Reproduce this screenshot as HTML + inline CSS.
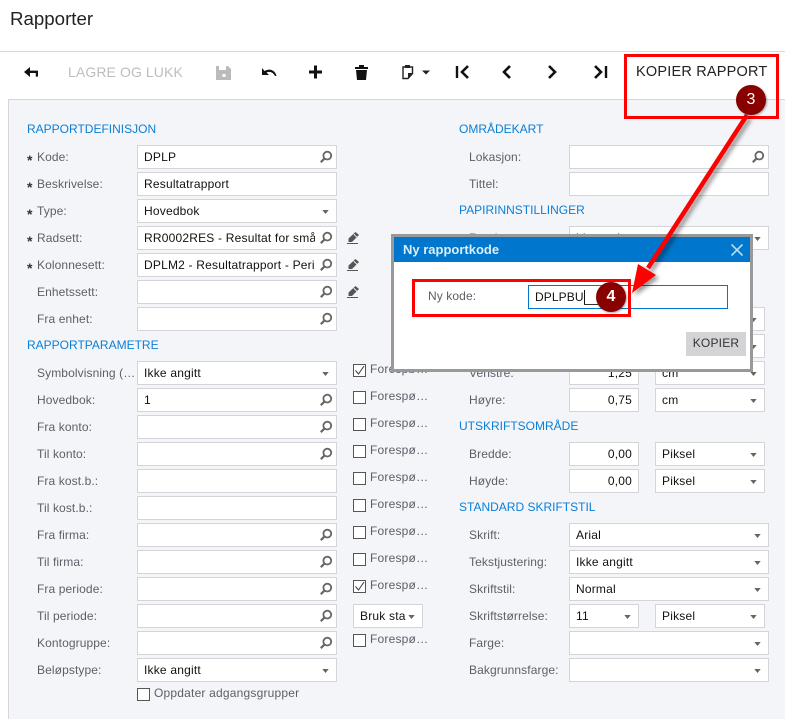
<!DOCTYPE html>
<html lang="no"><head><meta charset="utf-8"><title>Rapporter</title>
<style>
html,body{margin:0;padding:0;background:#fff}
body{width:785px;height:719px;overflow:hidden;position:relative;font-family:"Liberation Sans",Arial,sans-serif;font-size:12px;color:#111}
.a{position:absolute;white-space:nowrap}
.title{left:10px;top:7px;font-size:18.7px;line-height:24px;color:#222}
.hline{left:0;top:51px;width:785px;height:1px;background:#d8d8d8}
.panel{left:8px;top:99px;width:777px;height:620px;box-sizing:border-box;background:#f4f5f8;border:1px solid #d6d6d6;border-right:0;border-bottom:0}
.tb{top:63px;font-size:14px;line-height:18px}
.h{font-size:12px;line-height:16px;color:#0a7fd6;left:27px}
.l{font-size:12px;line-height:16px;color:#5e5e68;letter-spacing:.1px}
.s{font-size:14px;font-weight:bold;line-height:16px;left:27px;color:#333}
.f{height:24px;box-sizing:border-box;border:1px solid #d3d5d8;background:#fff;font-size:12px;line-height:22px;padding-left:6px;overflow:hidden;letter-spacing:.2px}
.w1{left:137px;width:200px}.w2{left:569px;width:200px}.n{left:569px;width:70px;text-align:right;padding:0 6px 0 0}.u{left:655px;width:110px}
.c{width:13px;height:13px;box-sizing:border-box;left:353px;border:1px solid #555;background:#fff}
.fp{left:370px;font-size:12px;line-height:16px;color:#5e5e68;letter-spacing:.2px}
svg.i{position:absolute;overflow:visible}
.dlg{left:391px;top:234px;width:362px;height:138px;box-sizing:border-box;border:3px solid #999;background:#fff}
.dh{left:0;top:0;width:356px;height:25px;background:#0077cc;color:#d8eefa;font-size:13px;font-weight:bold;line-height:25px;padding-left:9px;box-sizing:border-box}
.num{width:30px;height:30px;border-radius:50%;background:#880000;color:#fff;text-align:center;line-height:30px;font-size:16px;box-shadow:1px 1px 2px rgba(0,0,0,.35)}
</style></head><body>
<svg width="0" height="0" style="position:absolute"><defs>
<symbol id="se" viewBox="0 0 12 12" overflow="visible"><circle cx="7.300" cy="4.600" r="3.900" fill="none" stroke="#666" stroke-width="1.800"/><path d="M4.500 7.500 .8 11.200" stroke="#666" stroke-width="2.200" fill="none"/></symbol>
<symbol id="ca" viewBox="0 0 8 5"><path d="M0 0h8L4 5z" fill="#666"/></symbol>
<symbol id="pe" viewBox="0 0 12 12" overflow="visible"><path d="M8.500 0 12 3 5 10H1.500V6.500z" fill="#555"/><path d="M0 11.500h11" stroke="#555"/><path d="M6.800 2.200l3 3" stroke="#f4f5f8"/></symbol>
<symbol id="ck" viewBox="0 0 13 13" overflow="visible"><path d="M2.500 6.500 5.500 10 11 2" fill="none" stroke="#444" stroke-width="1.100"/></symbol>
</defs></svg>

<div class="a title">Rapporter</div>
<div class="a hline"></div>
<div class="a panel"></div>

<!-- toolbar -->
<svg class="i" style="left:0;top:0" width="785" height="99">
<path d="M24 72l6-5v3.600h8v6h-2.200v-3.600H30V77z" fill="#111"/>
<path d="M216 66h12l3 3v11h-15z" fill="#bbb"/><rect x="219" y="66" width="7" height="4" fill="#fff"/><rect x="222.500" y="74" width="3" height="3" fill="#fff"/>
<path d="M262 68v7h7l-2.500-2.500c3-1.500 6.500-.5 8.500 3.500h1.500c-1-5-6-8.500-12-5z" fill="#111"/>
<path d="M309 70.500h5v-5h3v5h5v3h-5v5h-3v-5h-5z" fill="#111"/>
<path d="M355 67h4v-2h5v2h4v2h-13z" fill="#111"/><path d="M356 70h11l-1 10h-9z" fill="#111"/>
<path d="M403 67h9.500v6.500l-4.500 5h-5z" fill="none" stroke="#222" stroke-width="1.400"/><rect x="405" y="65" width="5" height="3" fill="#222"/><path d="M408 78v-5h4.500z" fill="#222"/>
<path d="M422 70.500h8l-4 4z" fill="#222"/>
<path d="M457 66v12" stroke="#111" stroke-width="2.400"/><path d="M468 66l-6 6 6 6" fill="none" stroke="#111" stroke-width="2.600"/>
<path d="M510 66l-6 6 6 6" fill="none" stroke="#111" stroke-width="2.600"/>
<path d="M549 66l6 6-6 6" fill="none" stroke="#111" stroke-width="2.600"/>
<path d="M595 66l6 6-6 6" fill="none" stroke="#111" stroke-width="2.600"/><path d="M606 66v12" stroke="#111" stroke-width="2.400"/>
</svg>
<div class="a tb" style="left:68px;color:#bdbdbd;font-size:14px;letter-spacing:.1px">LAGRE OG LUKK</div>
<div class="a tb" style="left:636px;color:#222;font-size:14.500px;letter-spacing:.2px">KOPIER RAPPORT</div>

<!-- left column -->
<div class="a h" style="top:121px">RAPPORTDEFINISJON</div>
<div class="a s" style="top:152px">*</div><div class="a l" style="left:37px;top:149px">Kode:</div>
<div class="a f w1" style="top:145px">DPLP</div>
<div class="a s" style="top:179px">*</div><div class="a l" style="left:37px;top:176px">Beskrivelse:</div>
<div class="a f w1" style="top:172px">Resultatrapport</div>
<div class="a s" style="top:206px">*</div><div class="a l" style="left:37px;top:203px">Type:</div>
<div class="a f w1" style="top:199px">Hovedbok</div>
<div class="a s" style="top:233px">*</div><div class="a l" style="left:37px;top:230px">Radsett:</div>
<div class="a f w1" style="top:226px"><div style="width:171px;overflow:hidden">RR0002RES - Resultat for små bedrifter</div></div>
<div class="a s" style="top:260px">*</div><div class="a l" style="left:37px;top:257px">Kolonnesett:</div>
<div class="a f w1" style="top:253px"><div style="width:171px;overflow:hidden">DPLM2 - Resultatrapport - Periode</div></div>
<div class="a l" style="left:37px;top:284px">Enhetssett:</div><div class="a f w1" style="top:280px"></div>
<div class="a l" style="left:37px;top:311px">Fra enhet:</div><div class="a f w1" style="top:307px"></div>

<div class="a h" style="top:337px">RAPPORTPARAMETRE</div>
<div class="a l" style="left:37px;top:365px">Symbolvisning (…</div><div class="a f w1" style="top:361px">Ikke angitt</div>
<div class="a l" style="left:37px;top:392px">Hovedbok:</div><div class="a f w1" style="top:388px">1</div>
<div class="a l" style="left:37px;top:419px">Fra konto:</div><div class="a f w1" style="top:415px"></div>
<div class="a l" style="left:37px;top:446px">Til konto:</div><div class="a f w1" style="top:442px"></div>
<div class="a l" style="left:37px;top:473px">Fra kost.b.:</div><div class="a f w1" style="top:469px"></div>
<div class="a l" style="left:37px;top:500px">Til kost.b.:</div><div class="a f w1" style="top:496px"></div>
<div class="a l" style="left:37px;top:527px">Fra firma:</div><div class="a f w1" style="top:523px"></div>
<div class="a l" style="left:37px;top:554px">Til firma:</div><div class="a f w1" style="top:550px"></div>
<div class="a l" style="left:37px;top:581px">Fra periode:</div><div class="a f w1" style="top:577px"></div>
<div class="a l" style="left:37px;top:608px">Til periode:</div><div class="a f w1" style="top:604px"></div>
<div class="a l" style="left:37px;top:635px">Kontogruppe:</div><div class="a f w1" style="top:631px"></div>
<div class="a l" style="left:37px;top:662px">Beløpstype:</div><div class="a f w1" style="top:658px">Ikke angitt</div>
<div class="a c" style="left:137px;top:688px"></div><div class="a fp" style="left:154px;top:685px">Oppdater adgangsgrupper</div>

<!-- checkboxes -->
<div class="a c" style="top:364px"></div><div class="a fp" style="top:361px">Forespø…</div>
<div class="a c" style="top:391px"></div><div class="a fp" style="top:388px">Forespø…</div>
<div class="a c" style="top:418px"></div><div class="a fp" style="top:415px">Forespø…</div>
<div class="a c" style="top:445px"></div><div class="a fp" style="top:442px">Forespø…</div>
<div class="a c" style="top:472px"></div><div class="a fp" style="top:469px">Forespø…</div>
<div class="a c" style="top:499px"></div><div class="a fp" style="top:496px">Forespø…</div>
<div class="a c" style="top:526px"></div><div class="a fp" style="top:523px">Forespø…</div>
<div class="a c" style="top:553px"></div><div class="a fp" style="top:550px">Forespø…</div>
<div class="a c" style="top:580px"></div><div class="a fp" style="top:577px">Forespø…</div>
<div class="a f" style="left:353px;top:604px;width:70px">Bruk sta</div>
<div class="a c" style="top:634px"></div><div class="a fp" style="top:631px">Forespø…</div>

<!-- right column -->
<div class="a h" style="left:459px;top:121px">OMRÅDEKART</div>
<div class="a l" style="left:469px;top:149px">Lokasjon:</div><div class="a f w2" style="top:145px"></div>
<div class="a l" style="left:469px;top:176px">Tittel:</div><div class="a f w2" style="top:172px"></div>
<div class="a h" style="left:459px;top:202px">PAPIRINNSTILLINGER</div>
<div class="a l" style="left:469px;top:230px">Retning:</div><div class="a f w2" style="top:226px">Liggende</div>
<div class="a f n" style="top:307px"></div><div class="a f u" style="top:307px"></div>
<div class="a f n" style="top:334px"></div><div class="a f u" style="top:334px"></div>
<div class="a l" style="left:469px;top:365px">Venstre:</div><div class="a f n" style="top:361px">1,25</div><div class="a f u" style="top:361px">cm</div>
<div class="a l" style="left:469px;top:392px">Høyre:</div><div class="a f n" style="top:388px">0,75</div><div class="a f u" style="top:388px">cm</div>
<div class="a h" style="left:459px;top:418px">UTSKRIFTSOMRÅDE</div>
<div class="a l" style="left:469px;top:446px">Bredde:</div><div class="a f n" style="top:442px">0,00</div><div class="a f u" style="top:442px">Piksel</div>
<div class="a l" style="left:469px;top:473px">Høyde:</div><div class="a f n" style="top:469px">0,00</div><div class="a f u" style="top:469px">Piksel</div>
<div class="a h" style="left:459px;top:499px">STANDARD SKRIFTSTIL</div>
<div class="a l" style="left:469px;top:527px">Skrift:</div><div class="a f w2" style="top:523px">Arial</div>
<div class="a l" style="left:469px;top:554px">Tekstjustering:</div><div class="a f w2" style="top:550px">Ikke angitt</div>
<div class="a l" style="left:469px;top:581px">Skriftstil:</div><div class="a f w2" style="top:577px">Normal</div>
<div class="a l" style="left:469px;top:608px">Skriftstørrelse:</div><div class="a f" style="left:569px;top:604px;width:70px">11</div><div class="a f u" style="top:604px">Piksel</div>
<div class="a l" style="left:469px;top:635px">Farge:</div><div class="a f w2" style="top:631px"></div>
<div class="a l" style="left:469px;top:662px">Bakgrunnsfarge:</div><div class="a f w2" style="top:658px"></div>

<!-- field icons -->
<svg class="i" style="left:0;top:0" width="785" height="719">
<use href="#se" x="320" y="151" width="12" height="12"/><use href="#se" x="320" y="232" width="12" height="12"/><use href="#se" x="320" y="259" width="12" height="12"/><use href="#se" x="320" y="286" width="12" height="12"/><use href="#se" x="320" y="313" width="12" height="12"/>
<use href="#se" x="320" y="394" width="12" height="12"/><use href="#se" x="320" y="421" width="12" height="12"/><use href="#se" x="320" y="448" width="12" height="12"/>
<use href="#se" x="320" y="529" width="12" height="12"/><use href="#se" x="320" y="556" width="12" height="12"/><use href="#se" x="320" y="583" width="12" height="12"/><use href="#se" x="320" y="610" width="12" height="12"/><use href="#se" x="320" y="637" width="12" height="12"/>
<use href="#se" x="752" y="151" width="12" height="12"/>
<use href="#ca" x="322" y="210" width="7" height="4"/><use href="#ca" x="322" y="372" width="7" height="4"/><use href="#ca" x="322" y="669" width="7" height="4"/>
<use href="#ca" x="754" y="237" width="7" height="4"/>
<use href="#ca" x="750" y="318" width="7" height="4"/><use href="#ca" x="750" y="345" width="7" height="4"/><use href="#ca" x="750" y="372" width="7" height="4"/><use href="#ca" x="750" y="399" width="7" height="4"/><use href="#ca" x="750" y="453" width="7" height="4"/><use href="#ca" x="750" y="480" width="7" height="4"/>
<use href="#ca" x="754" y="534" width="7" height="4"/><use href="#ca" x="754" y="561" width="7" height="4"/><use href="#ca" x="754" y="588" width="7" height="4"/><use href="#ca" x="750" y="615" width="7" height="4"/><use href="#ca" x="754" y="642" width="7" height="4"/><use href="#ca" x="754" y="669" width="7" height="4"/>
<use href="#ca" x="624" y="615" width="7" height="4"/><use href="#ca" x="408" y="615" width="7" height="4"/>
<use href="#pe" x="347" y="232" width="12" height="12"/><use href="#pe" x="347" y="259" width="12" height="12"/><use href="#pe" x="347" y="286" width="12" height="12"/>
<use href="#ck" x="353" y="364" width="13" height="13"/><use href="#ck" x="353" y="580" width="13" height="13"/>
</svg>

<!-- dialog -->
<div class="a dlg">
<div class="a dh">Ny rapportkode</div>
<svg class="i" style="left:337px;top:7px" width="12" height="12"><path d="M.5.5l11 11M11.500.5l-11 11" stroke="#b5dcf3" stroke-width="1.600" fill="none"/></svg>
<div class="a l" style="left:34px;top:51px">Ny kode:</div>
<div class="a" style="left:134px;top:48px;width:200px;height:24px;box-sizing:border-box;border:1px solid #0077cc;padding-left:6px;line-height:22px;font-size:12px;letter-spacing:.1px">DPLPBU</div>
<div class="a" style="left:190px;top:53px;width:1px;height:15px;background:#111"></div>
<div class="a" style="left:190px;top:67px;width:14px;height:1px;background:#333"></div>
<div class="a" style="left:292px;top:95px;width:60px;height:24px;background:#d4d4d6;text-align:center;line-height:22px;color:#333;font-size:12px;letter-spacing:.2px">KOPIER</div>
</div>

<!-- annotations -->
<div class="a" style="left:624px;top:54px;width:155px;height:65px;box-sizing:border-box;border:3px solid #f00"></div>
<div class="a" style="left:412px;top:279px;width:219px;height:38px;box-sizing:border-box;border:3px solid #f00"></div>
<svg class="i" style="left:0;top:0;filter:drop-shadow(3px 3px 2px rgba(0,0,0,.4))" width="785" height="719"><path d="M747 115 648 268" stroke="#f00" stroke-width="4.500" fill="none"/><path d="M632 293 638 264 656 275z" fill="#f00"/></svg>
<div class="a num" style="left:736px;top:85px">3</div>
<div class="a num" style="left:596px;top:282px;font-weight:bold">4</div>
</body></html>
